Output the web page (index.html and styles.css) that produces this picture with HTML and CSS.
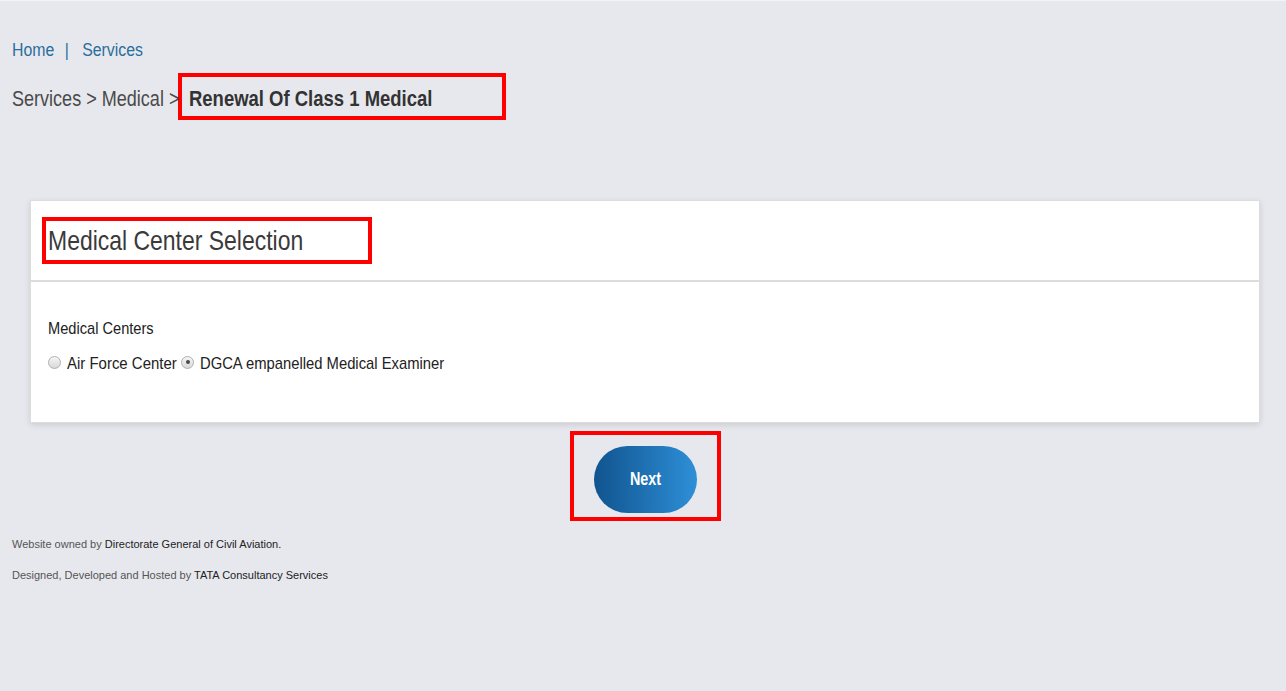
FILE: index.html
```html
<!DOCTYPE html>
<html lang="en">
<head>
<meta charset="utf-8">
<title>Renewal Of Class 1 Medical</title>
<link rel="stylesheet" href="styles.css">
</head>
<body>
<div class="page">
  <nav class="topnav">
    <a href="#" class="toplink">Home</a><span class="sep">|</span><a href="#" class="toplink">Services</a>
  </nav>
  <div class="crumbs">
    <span class="crumb-path"><span class="sq sq82">Services &gt; Medical &gt;</span></span><span class="mark mark-crumb"><b class="sq sq84">Renewal Of Class 1 Medical</b></span>
  </div>

  <section class="card">
    <header class="card-head">
      <h2 class="mark mark-title"><span class="sq sq82">Medical Center Selection</span></h2>
    </header>
    <div class="card-body">
      <div class="field-label"><span class="sq sq86">Medical Centers</span></div>
      <div class="radios">
        <label class="radio"><span class="dot"></span><span class="rtext rtext-a"><span class="sq sq88">Air Force Center</span></span></label>
        <label class="radio"><span class="dot on"></span><span class="rtext rtext-b"><span class="sq sq87">DGCA empanelled Medical Examiner</span></span></label>
      </div>
    </div>
  </section>

  <div class="actions">
    <div class="mark mark-btn"><button class="next"><span class="sq sq80 center">Next</span></button></div>
  </div>

  <footer class="foot">
    <p>Website owned by <a href="#">Directorate General of Civil Aviation.</a></p>
    <p>Designed, Developed and Hosted by <a href="#">TATA Consultancy Services</a></p>
  </footer>
</div>
</body>
</html>
```
FILE: styles.css
```css
html, body {
  margin: 0;
  padding: 0;
  background: #e7e8ee;
  height: 100%;
}
body {
  font-family: "Liberation Sans", Arial, sans-serif;
  color: #333;
  border-top: 1px solid #f2f3f6;
}
.page {
  padding: 0 0 0 12px;
}
.sq {
  display: inline-block;
  white-space: nowrap;
  transform-origin: 0 50%;
}
.sq.center {
  transform-origin: 50% 50%;
}
.sq80 { transform: scaleX(0.80); }
.sq82 { transform: scaleX(0.82); }
.sq84 { transform: scaleX(0.84); }
.sq86 { transform: scaleX(0.86); }
.sq87 { transform: scaleX(0.87); }
.sq88 { transform: scaleX(0.88); }

.topnav {
  padding-top: 37px;
  height: 24px;
  font-size: 18px;
  line-height: 24px;
  transform: scaleX(0.88);
  transform-origin: 0 50%;
  white-space: nowrap;
}
.toplink {
  color: #2a6e9c;
  text-decoration: none;
}
.sep {
  color: #2a6e9c;
  margin: 0 15px 0 12px;
}
.crumbs {
  margin-top: 11px;
  font-size: 22px;
  line-height: 39px;
  color: #4a4a4a;
  display: flex;
  align-items: flex-start;
}
.crumb-path {
  width: 166px;
  flex: none;
  padding-top: 6px;
}
.mark {
  border: 4px solid #ff0000;
  box-sizing: border-box;
}
.mark-crumb {
  display: inline-block;
  width: 328px;
  height: 47px;
  padding: 2px 0 0 7px;
  color: #333;
  background: #e7e8ee;
  line-height: 39px;
}
.mark-crumb b {
  font-weight: bold;
}
.card {
  margin: 80px 26px 0 18px;
  background: #fff;
  border: 1px solid #dcdcdc;
  box-shadow: 0 2px 6px rgba(0,0,0,0.12);
}
.card-head {
  height: 81px;
  border-bottom: 2px solid #dcdcdc;
  box-sizing: border-box;
  padding: 16px 0 0 11px;
}
.mark-title {
  margin: 0;
  width: 330px;
  height: 47px;
  font-size: 28px;
  font-weight: normal;
  line-height: 39px;
  padding-left: 2px;
  color: #3a3a3a;
}
.card-body {
  padding: 36px 0 40px 17px;
  height: 140px;
  box-sizing: border-box;
  font-size: 17px;
  color: #222;
}
.field-label {
  line-height: 22px;
  margin-bottom: 13px;
}
.radios {
  display: flex;
  align-items: center;
  line-height: 22px;
}
.radio {
  display: inline-flex;
  align-items: center;
  margin-right: 5px;
}
.rtext {
  display: inline-block;
}
.rtext-a { width: 109px; }
.rtext-b { width: 243px; }
.dot {
  width: 13px;
  height: 13px;
  border-radius: 50%;
  border: 1px solid #b0b0b0;
  background: linear-gradient(#f6f6f6, #d8d8d8);
  margin-right: 6px;
  position: relative;
  top: -2px;
  box-sizing: border-box;
  flex: none;
}
.dot.on::after {
  content: "";
  position: absolute;
  left: 3.5px;
  top: 3.5px;
  width: 4px;
  height: 4px;
  border-radius: 50%;
  background: #4a4a4a;
}
.actions {
  display: flex;
  justify-content: center;
  margin-top: 8px;
  padding-right: 7px;
}
.mark-btn {
  width: 151px;
  height: 90px;
  padding: 11px 0 0 20px;
}
.next {
  width: 103px;
  height: 67px;
  border: none;
  border-radius: 34px;
  background: linear-gradient(to right, #10548f, #2e8fd7);
  color: #fff;
  font-family: inherit;
  font-size: 18px;
  font-weight: bold;
  cursor: pointer;
  padding: 0;
}
.foot {
  margin-top: 16px;
  font-size: 11px;
  color: #555;
}
.foot p {
  margin: 0 0 17px;
  line-height: 14px;
}
.foot a {
  color: #222;
  text-decoration: none;
}
```
